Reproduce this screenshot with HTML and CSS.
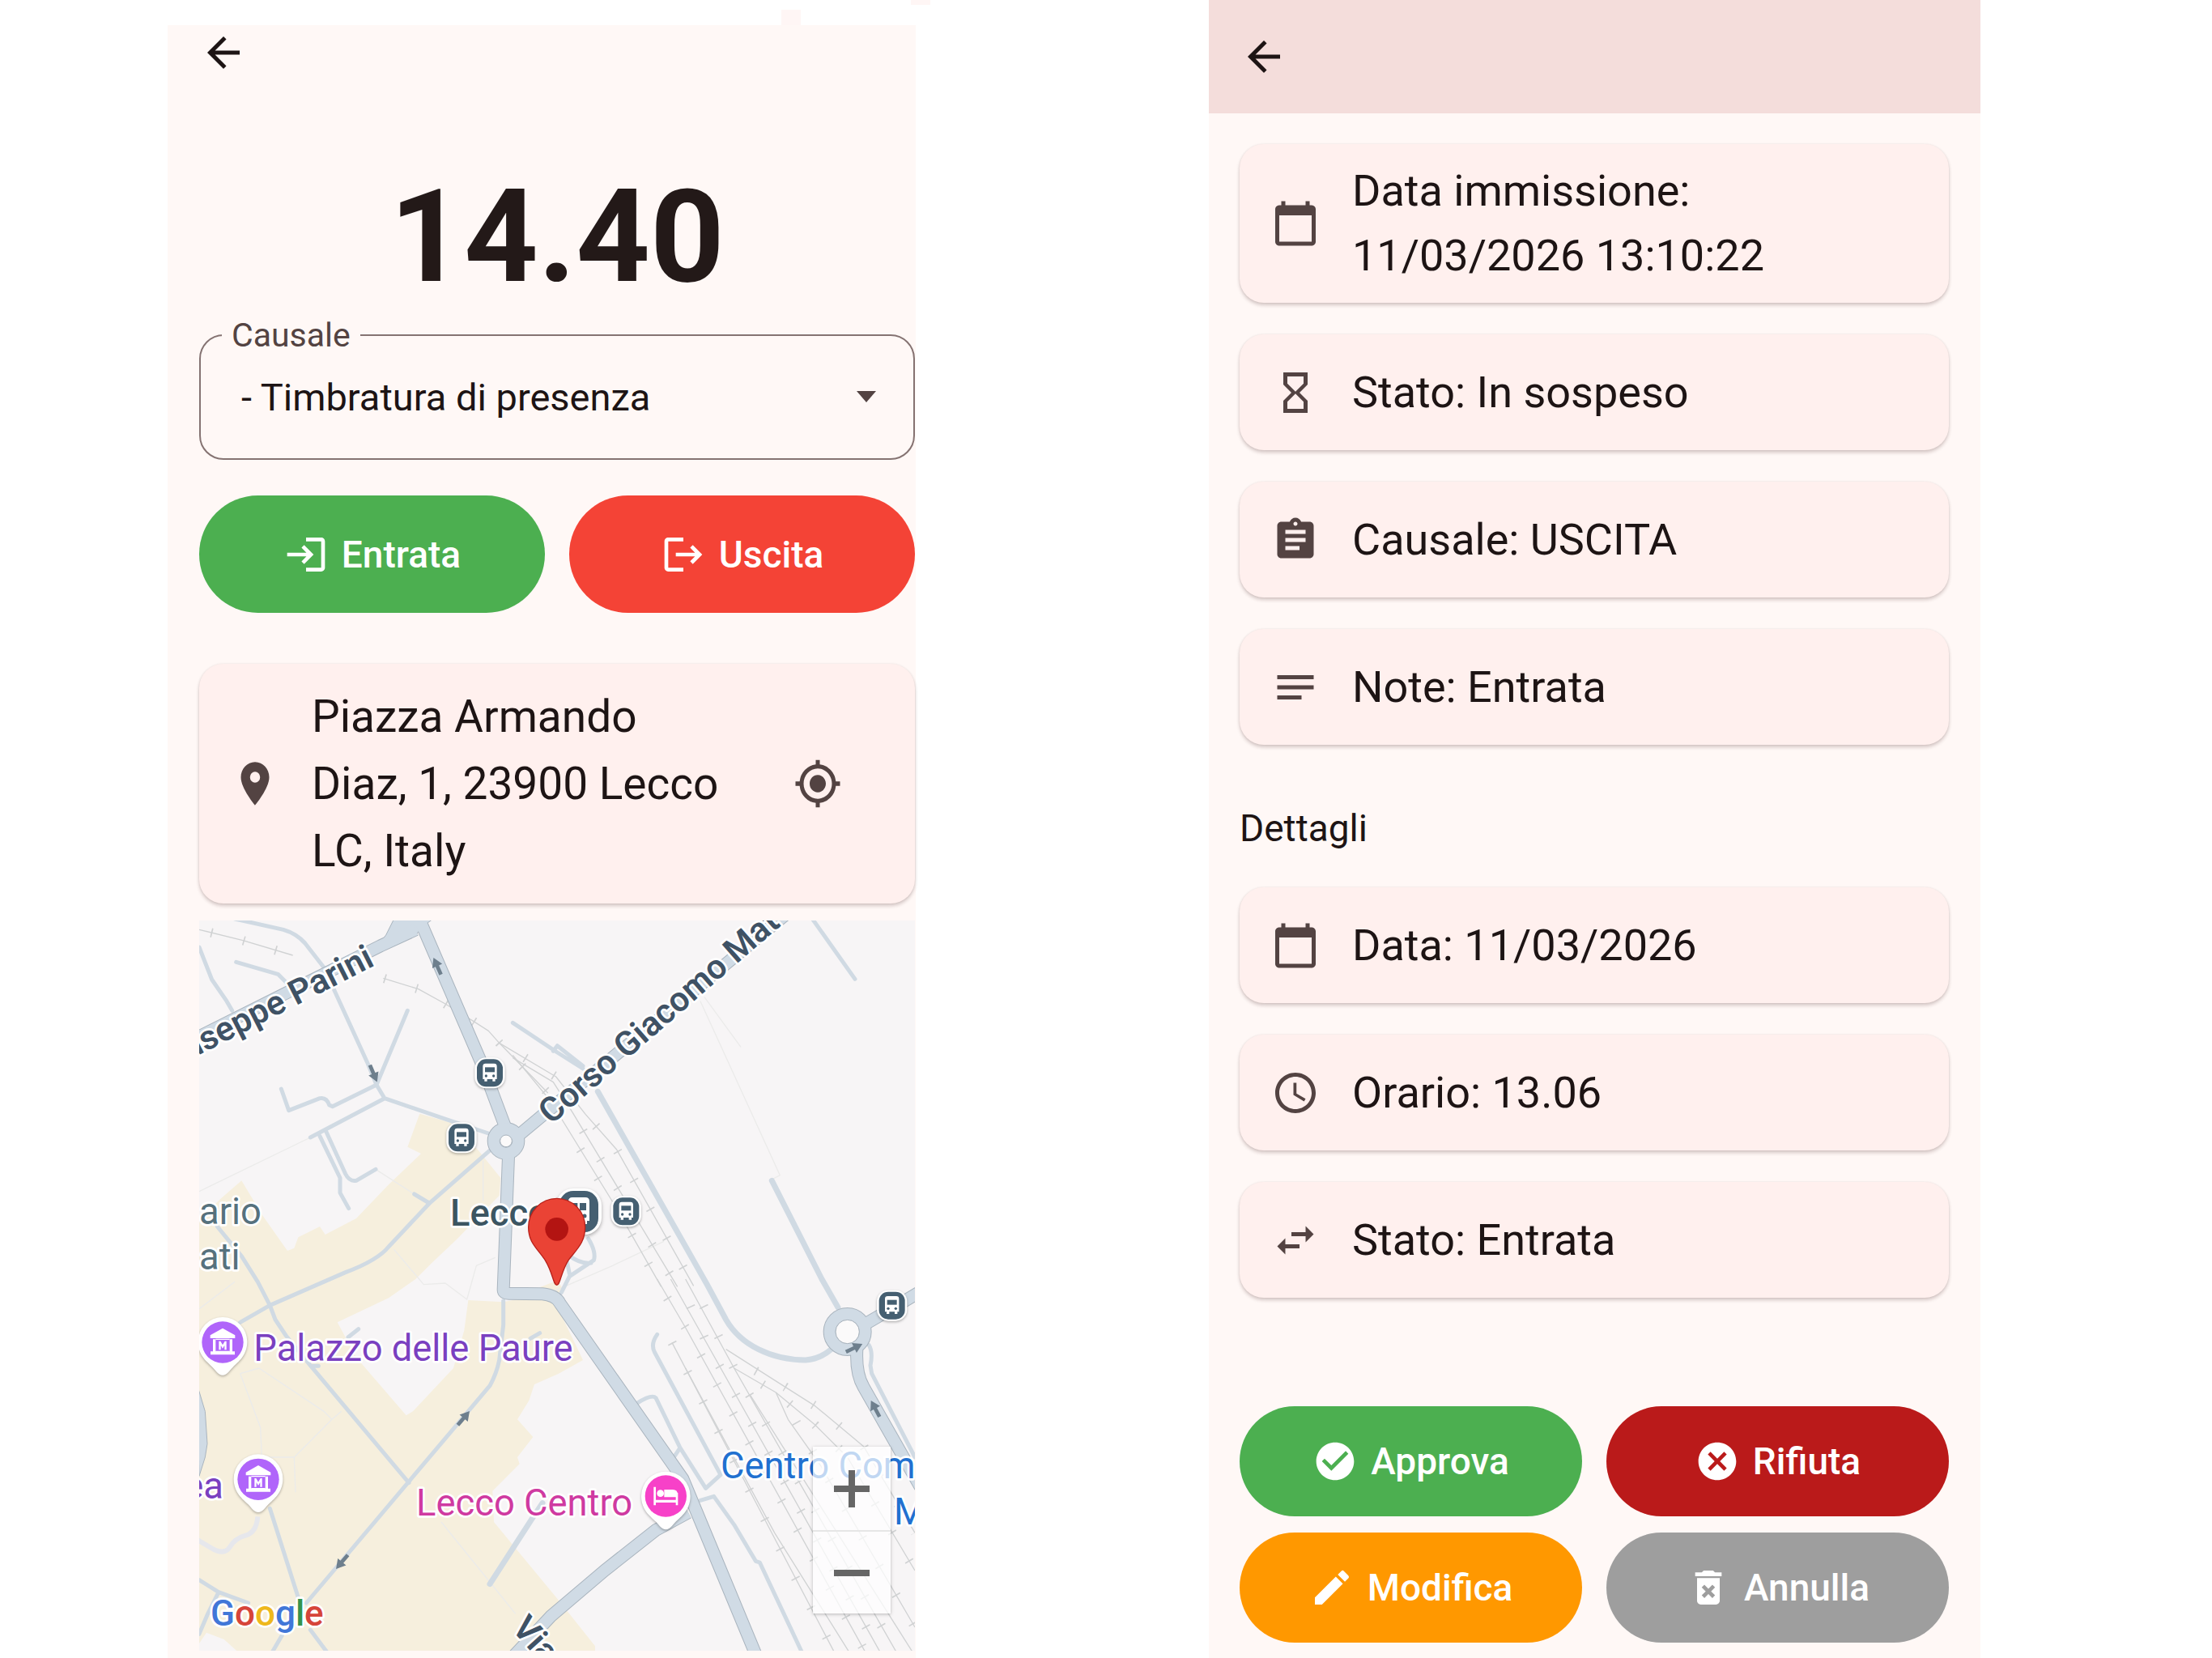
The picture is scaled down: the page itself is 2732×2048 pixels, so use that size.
FILE: index.html
```html
<!DOCTYPE html>
<html lang="it">
<head>
<meta charset="utf-8">
<meta name="viewport" content="width=device-width, initial-scale=1">
<title>Timbrature</title>
<link rel="stylesheet" href="styles.css">
</head>
<body>
<main class="screens">
  <section class="screen screen-stamp" aria-label="Timbratura">
    <span class="speck speck-low"></span>
    <span class="speck speck-high"></span>
    <button class="back" type="button" aria-label="Indietro">
      <svg class="icon" viewBox="0 0 24 24"><path d="M20 11H7.830l5.590-5.590L12 4l-8 8 8 8 1.410-1.410L7.830 13H20v-2z"/></svg>
    </button>
    <h1 class="clock">14.40</h1>

    <fieldset class="field">
      <legend class="field-legend"><label for="causale">Causale</label></legend>
      <div class="field-body">
        <select class="field-select" id="causale">
          <option>- Timbratura di presenza</option>
        </select>
        <svg class="field-caret" viewBox="0 0 24 14"><path d="M0 0h24L12 14z"/></svg>
      </div>
    </fieldset>

    <div class="actions actions-stamp">
      <button class="pill pill-green" type="button">
        <svg class="icon icon-pill" viewBox="0 0 24 24"><path d="M11 7L9.600 8.400l2.600 2.600H2v2h10.200l-2.600 2.600L11 17l5-5-5-5zm9 12h-8v2h8c1.100 0 2-.9 2-2V5c0-1.100-.9-2-2-2h-8v2h8v14z"/></svg>
        Entrata
      </button>
      <button class="pill pill-red" type="button">
        <svg class="icon icon-pill" viewBox="0 0 24 24"><path d="M17 7l-1.410 1.410L18.170 11H8v2h10.170l-2.580 2.580L17 17l5-5zM4 5h8V3H4c-1.100 0-2 .9-2 2v14c0 1.100.9 2 2 2h8v-2H4V5z"/></svg>
        Uscita
      </button>
    </div>

    <div class="card card-address">
      <svg class="icon icon-tall" viewBox="0 0 24 24" preserveAspectRatio="none"><path d="M12 2C8.130 2 5 5.130 5 9c0 5.250 7 13 7 13s7-7.750 7-13c0-3.870-3.130-7-7-7zm0 9.500a2.500 2.500 0 1 1 0-5 2.500 2.500 0 0 1 0 5z"/></svg>
      <p class="address">Piazza Armando<br>Diaz, 1, 23900 Lecco<br>LC, Italy</p>
      <button class="locate" type="button" aria-label="La mia posizione">
        <svg class="icon icon-tall" viewBox="0 0 24 24" preserveAspectRatio="none"><path d="M12 8c-2.210 0-4 1.790-4 4s1.790 4 4 4 4-1.790 4-4-1.790-4-4-4zm8.940 3A8.994 8.994 0 0 0 13 3.060V1h-2v2.060A8.994 8.994 0 0 0 3.060 11H1v2h2.060A8.994 8.994 0 0 0 11 20.940V23h2v-2.060A8.994 8.994 0 0 0 20.940 13H23v-2h-2.060zM12 19c-3.870 0-7-3.130-7-7s3.130-7 7-7 7 3.130 7 7-3.130 7-7 7z"/></svg>
      </button>
    </div>

    <div class="map">
      <svg class="map-canvas" viewBox="18 21 2652 2706" preserveAspectRatio="xMidYMid slice" role="img" aria-label="Mappa di Lecco">
        <defs>
          <g id="bus">
            <rect class="halo" x="-56" y="-56" width="112" height="114" rx="42"/>
            <rect class="badge" x="-48" y="-50" width="96" height="102" rx="34"/>
            <path fill="#fff" d="M-16-34H16Q26-34 26-24V24H20V32H10V24H-10V32H-20V24H-26V-24Q-26-34-16-34Z"/>
            <path class="badge" d="M-18-20H18V-2H-18Z"/>
            <circle class="badge" cx="-14" cy="12" r="5"/><circle class="badge" cx="14" cy="12" r="5"/>
          </g>
          <g id="drop"><path class="halo" d="M0 124C-16 124-24 108-38 94C-56 76-91 52-91 0A91 91 0 0 1 91 0C91 52 56 76 38 94C24 108 16 124 0 124Z"/></g>
          <g id="museum">
            <use href="#drop"/>
            <circle r="77" cy="2" fill="#b065fa"/>
            <path fill="#fff" d="M0-50L46-24V-13H-46V-24ZM-36-9H-26V36H-36ZM26-9H36V36H26ZM-45 36H45V48H-45ZM-14-2H-8L0 12 8-2H14V30H7V13L0 25-7 13V30H-14Z"/>
            <path fill="none" stroke="#fff" stroke-width="4" d="M-26-9H26M-26 36H26"/>
          </g>
          <path id="way" d="M-7 34V0H-20L0-34 20 0H7V34Z"/>
        </defs>

        <path class="land" d="M0 0H2700V2760H0Z"/>
        <path class="town" d="M835 737L950 770 1050 870 1135 975 1130 1040 975 1200 880 1290 820 1350 720 1420 530 1510 600 1640 785 1855 810 1840 960 1680 1000 1540 1015 1428 1145 1435 1320 1400 1440 1650 1350 1700 1260 1740 1240 1800 1197 1870 1255 1935 1197 2010 1205 2035 1105 2135 1110 2250 1180 2335 1350 2540 1485 2710V2730H160L110 2685 45 2660 18 2700V1130L100 1050 175 985 250 1110 345 1245 370 1235 385 1195 465 1155 485 1185 600 1125 720 1000 840 885 790 860Z"/>
        <path class="town" d="M1280 1380L1345 1355 1365 1385 1350 1400Z"/>

        <g class="trace">
          <path d="M1875 320L2170 965 2145 978M1890 305L2025 490M18 1025L430 825M672 943L815 1035M1070 910V1060M740 1240L850 1370 930 1365 1010 1425 1045 1300 1115 1270M1320 1400L1550 1300 1740 1210"/>
          <path d="M170 1700L240 1680 480 1840 510 1870 370 2010 250 2010 245 1900 170 1700M545 1840L510 1870M915 2250L1190 2590M18 1460L150 1360M370 2010L375 2140"/>
        </g>
        <path class="path" d="M235 2230Q230 2290 190 2300 150 2310 130 2345 110 2375 60 2345L10 2315"/>

        <g class="rail">
          <path d="M18 55L180 95 365 150"/>
          <path d="M700 235L830 275 930 330 1035 395 1090 430 1130 475 1310 660"/>
          <path d="M1130 475L1340 600 1450 740 1565 870 1850 1375"/>
          <path d="M1180 530L1330 620 1400 730 1790 1378"/>
          <path d="M1180 520L1320 690 1560 1080 1730 1378"/>
          <path d="M1715 1350L1820 1530 2485 2730"/>
          <path d="M1765 1350L1900 1590 2540 2730"/>
          <path d="M1820 1350L2000 1680 2600 2730"/>
          <path d="M1770 1585L2370 2730"/>
          <path d="M1820 1680L2150 2290 2425 2730"/>
          <path d="M1970 1610L2190 1750 2300 1820 2480 1970 2670 2290"/>
          <path d="M2000 1680L2155 1770 2300 1890 2420 2010 2670 2430"/>
          <path d="M2155 1770L2200 1870 2320 2040 2670 2640"/>
          <path d="M2060 1780L2660 2730"/>
        </g>
        <g class="ties">
          <path d="M62 66L180 95 365 150"/>
          <path d="M704 236L830 275 930 330 1035 395 1090 430 1130 475 1310 660"/>
          <path d="M1225 530L1340 600 1450 740 1565 870 1850 1375"/>
          <path d="M1440 800L1790 1378"/>
          <path d="M1430 870L1560 1080 1730 1378"/>
          <path d="M1752 1420L1820 1530 2485 2730"/>
          <path d="M1838 1450L1900 1590 2540 2730"/>
          <path d="M1887 1450L2000 1680 2600 2730"/>
          <path d="M1770 1585L2370 2730"/>
          <path d="M2080 1690L2190 1750 2300 1820 2480 1970 2670 2290"/>
          <path d="M2105 1740L2155 1770 2300 1890 2420 2010 2670 2430"/>
          <path d="M2230 1880L2320 2040 2670 2640"/>
        </g>

        <g class="lane">
          <path d="M150 15L330 55Q380 70 410 105L480 195 640 545 675 630M18 120L65 240 120 320 140 355M155 175L310 220 345 255"/>
          <path d="M790 355L675 630 705 680M322 645L350 725 465 680Q490 675 500 705L512 710 675 630M430 825L705 680 940 760 1090 810"/>
          <path d="M465 820L540 975V1030L572 1088M487 800L560 960Q575 990 600 985L672 943M815 1035L870 1068"/>
          <path d="M1110 860L870 1070 720 1230Q680 1280 560 1325L280 1447 170 1510M85 1155L175 1265 235 1360 280 1447 300 1500 340 1560 430 1670 795 2105M608 1535L570 1565M460 1672L435 1672"/>
          <path d="M1145 1430V1520L1130 1650Q1120 1700 1095 1745L415 2550M1245 1570L1280 1550M280 2200L385 2530M18 2465L90 2510 200 2550M90 2510L50 2590 18 2665M325 2670L290 2730M430 2650L490 2730"/>
          <path d="M2290 15L2448 238M1180 400L1345 510 1440 570M1330 505L1345 485 1440 560"/>
          <path d="M1460 1200Q1490 1250 1480 1280L1390 1340 1360 1400M1385 1260Q1430 1295 1470 1290M1380 1280L1390 1330"/>
          <path d="M1715 1555Q1690 1590 1705 1620L1950 2075 1895 2125 1800 1975 1710 1790Q1695 1775 1640 1810M1800 1975L1770 2020M1875 2170L1925 2155 2000 2260 2080 2395 2095 2400 2250 2730"/>
          <path d="M2500 1595Q2515 1620 2505 1670L2510 1700 2670 2010"/>
        </g>
        <g class="lane lane-wide">
          <path d="M1495 655L1900 1370 1970 1500Q2010 1570 2090 1610 2170 1650 2265 1650 2320 1645 2360 1610M2140 985L2325 1350 2385 1455M1290 2180L1250 2240 1095 2480"/>
        </g>

        <g class="road-edge">
          <path d="M-20 470L340 290 690 115 820 55M840 30L1060 540 1150 780V830M1165 870L1145 1390Q1145 1403 1165 1403L1290 1405Q1340 1410 1355 1440L1810 2090 1860 2210 2080 2740M1830 2215L1710 2280 1520 2430 1320 2600 1180 2750M1180 835L1300 735 2190 0"/>
          <path d="M2480 1520L2600 1450 2700 1390M2455 1610Q2450 1700 2480 1750L2690 2120"/>
          <circle cx="1155" cy="838" r="46"/><circle cx="2420" cy="1545" r="66"/>
        </g>
        <path class="shore" d="M10 1740L40 1840 48 1960 40 2010 18 2080Z"/>
        <path class="shore" d="M740 15L710 75 690 100 820 75 850 40 885 15Z"/>
        <g class="road">
          <path d="M-20 470L340 290 690 115 820 55M840 30L1060 540 1150 780V830M1165 870L1145 1390Q1145 1403 1165 1403L1290 1405Q1340 1410 1355 1440L1810 2090 1860 2210 2080 2740M1830 2215L1710 2280 1520 2430 1320 2600 1180 2750M1180 835L1300 735 2190 0"/>
          <path d="M2480 1520L2600 1450 2700 1390M2455 1610Q2450 1700 2480 1750L2690 2120"/>
          <circle cx="1155" cy="838" r="46"/><circle cx="2420" cy="1545" r="66"/>
        </g>
        <circle class="island" cx="1155" cy="838" r="22"/>
        <circle class="island" cx="2420" cy="1545" r="44"/>

        <g class="ways">
          <use href="#way" transform="translate(664 588) rotate(157)"/>
          <use href="#way" transform="translate(900 190) rotate(-24)"/>
          <use href="#way" transform="translate(998 1865) rotate(40)"/>
          <use href="#way" transform="translate(547 2398) rotate(220)"/>
          <use href="#way" transform="translate(2445 1605) rotate(64)"/>
          <use href="#way" transform="translate(2523 1830) rotate(-28)"/>
        </g>

        <g class="names">
          <text class="street" text-anchor="end" transform="translate(672 186) rotate(-27)">useppe Parini</text>
          <text class="street" transform="translate(1322 780) rotate(-41)">Corso Giacomo Mat</text>
          <text class="street" transform="translate(1172 2646) rotate(48)">Via</text>
          <text class="area" x="18" y="1145">ario</text>
          <text class="area" x="18" y="1315">ati</text>
          <text class="station" x="948" y="1153">Lecco</text>
          <text class="culture" x="220" y="1653">Palazzo delle Paure</text>
          <text class="culture" x="108" y="2162" text-anchor="end">ea</text>
          <text class="hotel" x="822" y="2226">Lecco Centro</text>
          <text class="shop" x="1950" y="2088">Centro Com</text>
          <text class="shop" x="2592" y="2260">M</text>
        </g>

        <use href="#bus" transform="translate(1095 585)"/>
        <use href="#bus" transform="translate(990 825)"/>
        <use href="#bus" transform="translate(1425 1098) scale(1.5)"/>
        <path fill="#fff" d="M1420 1064H1428V1100H1420Z"/>
        <use href="#bus" transform="translate(1600 1098)"/>
        <use href="#bus" transform="translate(2585 1447)"/>
        <use href="#museum" transform="translate(105 1582)"/>
        <use href="#museum" transform="translate(237 2090)"/>
        <g transform="translate(1747 2154)">
          <use href="#drop"/>
          <circle r="77" fill="#f741c8"/>
          <path fill="#fff" d="M-45-34H-37V14H37V-12H45V34H37V24H-37V34H-45ZM-6-24H26Q44-24 44-6V4H-6Z"/>
          <circle cx="-20" cy="-10" r="13" fill="#fff"/>
        </g>
        <path fill="#ea4335" stroke="#b8211a" stroke-width="4" d="M1343 1372C1330 1372 1330 1330 1300 1280 1270 1235 1238 1215 1238 1158A105 107 0 0 1 1448 1158C1448 1215 1416 1240 1386 1280 1356 1330 1356 1372 1343 1372Z"/>
        <circle cx="1343" cy="1165" r="43" fill="#b31412"/>
        <text class="brand" x="60" y="2633"><tspan fill="#4177d8">G</tspan><tspan fill="#d6453a">o</tspan><tspan fill="#eeb81d">o</tspan><tspan fill="#4177d8">g</tspan><tspan fill="#35934c">l</tspan><tspan fill="#d6453a">e</tspan></text>
      </svg>
      <div class="zoom">
        <button class="zoom-button" type="button" aria-label="Ingrandisci"><svg class="zoom-sign" viewBox="0 0 44 46"><path d="M18 0h8v19h18v8H26v19h-8V27H0v-8h18z"/></svg></button>
        <button class="zoom-button" type="button" aria-label="Riduci"><svg class="zoom-sign" viewBox="0 0 44 46"><path d="M0 19h44v8H0z"/></svg></button>
      </div>
    </div>
  </section>

  <section class="screen screen-request" aria-label="Richiesta">
    <header class="bar">
      <button class="back" type="button" aria-label="Indietro">
        <svg class="icon" viewBox="0 0 24 24"><path d="M20 11H7.830l5.590-5.590L12 4l-8 8 8 8 1.410-1.410L7.830 13H20v-2z"/></svg>
      </button>
    </header>
    <div class="request">
      <div class="cards">
        <div class="card">
          <svg class="icon" viewBox="0 0 24 24"><path d="M20 3h-1V1h-2v2H7V1H5v2H4c-1.100 0-2 .9-2 2v16c0 1.100.9 2 2 2h16c1.100 0 2-.9 2-2V5c0-1.100-.9-2-2-2zm0 18H4V8h16v13z"/></svg>
          <p class="card-text">Data immissione:<br>11/03/2026 13:10:22</p>
        </div>
        <div class="card">
          <svg class="icon" viewBox="0 0 24 24"><path d="M6 2v6h.01L6 8.010 10 12l-4 4 .01.010H6V22h12v-5.990h-.01L18 16l-4-4 4-3.990-.01-.010H18V2H6zm10 14.500V20H8v-3.500l4-4 4 4zm-4-5l-4-4V4h8v3.500l-4 4z"/></svg>
          <p class="card-text">Stato: In sospeso</p>
        </div>
        <div class="card">
          <svg class="icon" viewBox="0 0 24 24"><path d="M19 3h-4.180C14.400 1.840 13.300 1 12 1c-1.300 0-2.400.84-2.820 2H5c-1.100 0-2 .9-2 2v14c0 1.100.9 2 2 2h14c1.100 0 2-.9 2-2V5c0-1.100-.9-2-2-2zm-7 0c.55 0 1 .45 1 1s-.45 1-1 1-1-.45-1-1 .45-1 1-1zm2 14H7v-2h7v2zm3-4H7v-2h10v2zm0-4H7V7h10v2z"/></svg>
          <p class="card-text">Causale: USCITA</p>
        </div>
        <div class="card">
          <svg class="icon" viewBox="0 0 24 24"><path d="M3 18h12v-2H3v2zM3 6v2h18V6H3zm0 7h18v-2H3v2z"/></svg>
          <p class="card-text">Note: Entrata</p>
        </div>
      </div>
      <h2 class="subtitle">Dettagli</h2>
      <div class="cards">
        <div class="card">
          <svg class="icon" viewBox="0 0 24 24"><path d="M20 3h-1V1h-2v2H7V1H5v2H4c-1.100 0-2 .9-2 2v16c0 1.100.9 2 2 2h16c1.100 0 2-.9 2-2V5c0-1.100-.9-2-2-2zm0 18H4V8h16v13z"/></svg>
          <p class="card-text">Data: 11/03/2026</p>
        </div>
        <div class="card">
          <svg class="icon" viewBox="0 0 24 24"><path d="M11.990 2C6.470 2 2 6.480 2 12s4.470 10 9.990 10C17.520 22 22 17.520 22 12S17.520 2 11.990 2zM12 20c-4.420 0-8-3.580-8-8s3.580-8 8-8 8 3.580 8 8-3.580 8-8 8zm.5-13H11v6l5.250 3.150.75-1.230-4.500-2.670z"/></svg>
          <p class="card-text">Orario: 13.06</p>
        </div>
        <div class="card">
          <svg class="icon" viewBox="0 0 24 24"><path d="M6.990 11L3 15l3.990 4v-3H14v-2H6.990v-3zM21 9l-3.990-4v3H10v2h7.010v3L21 9z"/></svg>
          <p class="card-text">Stato: Entrata</p>
        </div>
      </div>
      <div class="actions actions-request">
        <button class="pill pill-green" type="button">
          <svg class="icon icon-pill" viewBox="0 0 24 24"><path d="M12 2C6.480 2 2 6.480 2 12s4.480 10 10 10 10-4.480 10-10S17.520 2 12 2zm-2 15l-5-5 1.410-1.410L10 14.170l7.590-7.590L19 8l-9 9z"/></svg>
          Approva
        </button>
        <button class="pill pill-dark" type="button">
          <svg class="icon icon-pill" viewBox="0 0 24 24"><path d="M12 2C6.470 2 2 6.470 2 12s4.470 10 10 10 10-4.470 10-10S17.530 2 12 2zm5 13.590L15.590 17 12 13.410 8.410 17 7 15.590 10.590 12 7 8.410 8.410 7 12 10.590 15.590 7 17 8.410 13.410 12 17 15.590z"/></svg>
          Rifiuta
        </button>
        <button class="pill pill-orange" type="button">
          <svg class="icon icon-pill" viewBox="0 0 24 24"><path d="M3 17.250V21h3.750L17.810 9.940l-3.750-3.750L3 17.250zM20.710 7.040a.996.996 0 0 0 0-1.410l-2.340-2.340a.996.996 0 0 0-1.410 0l-1.830 1.830 3.750 3.750 1.830-1.830z"/></svg>
          Modifica
        </button>
        <button class="pill pill-gray" type="button">
          <svg class="icon icon-pill" viewBox="0 0 24 24"><path d="M6 19c0 1.100.9 2 2 2h8c1.100 0 2-.9 2-2V7H6v12zm2.460-7.120l1.410-1.410L12 12.590l2.120-2.120 1.410 1.410L13.410 14l2.120 2.120-1.410 1.410L12 15.410l-2.120 2.120-1.410-1.410L10.590 14l-2.130-2.120zM15.500 4l-1-1h-5l-1 1H5v2h14V4z"/></svg>
          Annulla
        </button>
      </div>
    </div>
  </section>
</main>
</body>
</html>
```
FILE: styles.css
```css
* {
  box-sizing: border-box;
}

body {
  margin: 0;
  background: #fff;
  color: #1d1414;
  font-family: Roboto, "Liberation Sans", sans-serif;
}

h1, h2, p {
  margin: 0;
  font-weight: 400;
}

button {
  border: 0;
  padding: 0;
  background: none;
  color: inherit;
  font: inherit;
  cursor: pointer;
}

.icon {
  display: block;
  flex: none;
  width: 60px;
  height: 60px;
  fill: currentColor;
}

.icon-pill {
  width: 56px;
  height: 56px;
}

.icon-tall {
  height: 64px;
}

/* Two phone screens side by side */
.screens {
  display: grid;
  grid-template-columns: 207fr 924fr 362fr 953fr 286fr;
  min-height: 100vh;
}

.screen {
  background: #fff8f6;
}

.screen-stamp {
  position: relative;
  grid-column: 2;
  margin-top: 31px;
  padding: 4px 1px 9px 39px;
}

.screen-request {
  grid-column: 4;
}

.speck {
  position: absolute;
  width: 24px;
  background: #fff6f5;
}

.speck-low {
  top: -19px;
  right: 142px;
  height: 19px;
}

.speck-high {
  top: -31px;
  right: -18px;
  height: 6px;
}

.back {
  display: block;
}

.clock {
  margin-top: 108px;
  font-size: 160px;
  font-weight: 700;
  line-height: 180px;
  text-align: center;
  color: #231918;
}

/* Outlined drop-down */
.field {
  min-width: 0;
  margin: 7px 0 0;
  padding: 0 0 24px;
  border: 2px solid #857372;
  border-radius: 30px;
}

.field-legend {
  margin-left: 26px;
  padding: 0 12px;
  color: #534342;
  font-size: 41px;
  line-height: 48px;
}

.field-body {
  display: grid;
  align-items: center;
}

.field-select {
  grid-area: 1 / 1;
  width: 100%;
  height: 104px;
  padding: 0 90px 0 50px;
  border: 0;
  background: none;
  color: inherit;
  font: inherit;
  font-size: 47px;
  appearance: none;
}

.field-caret {
  grid-area: 1 / 1;
  justify-self: end;
  width: 24px;
  height: 14px;
  margin-right: 46px;
  fill: #534342;
  pointer-events: none;
}

.actions {
  display: grid;
  grid-template-columns: 1fr 1fr;
  column-gap: 30px;
}

.actions-stamp {
  grid-auto-rows: 145px;
  margin-top: 44px;
}

.actions-request {
  grid-auto-rows: 136px;
  row-gap: 20px;
  margin-top: 134px;
}

.pill {
  display: flex;
  align-items: center;
  justify-content: center;
  gap: 16px;
  border-radius: 80px;
  color: #fff;
  font-size: 46px;
  font-weight: 500;
}

.pill-green { background: #4caf50; }
.pill-red { background: #f44336; }
.pill-dark { background: #ba1a1a; }
.pill-orange { background: #ff9800; }
.pill-gray { background: #9e9e9e; }

.card {
  display: flex;
  align-items: center;
  gap: 40px;
  min-height: 143px;
  padding: 18px 39px;
  border-radius: 30px;
  background: #fff0ee;
  box-shadow: 0 3px 4px rgba(70, 30, 30, .22), 0 0 3px rgba(70, 30, 30, .08);
  color: #534342;
}

.card-text {
  color: #1d1414;
  font-size: 54px;
  line-height: 80px;
}

.card-address {
  min-height: 296px;
  margin-top: 63px;
  padding-right: 90px;
}

.address {
  flex: 1;
  color: #1d1414;
  font-size: 55px;
  line-height: 83px;
}

.map {
  position: relative;
  aspect-ratio: 884 / 902;
  margin-top: 21px;
  overflow: hidden;
}

.map-canvas {
  display: block;
  width: 100%;
  height: 100%;
}

.land { fill: #f7f5f6; }
.town { fill: #f6efdd; }
.halo { fill: #fff; filter: drop-shadow(0 4px 4px rgba(0, 0, 0, .3)); }
.badge { fill: #455f71; }

.trace, .path, .rail, .ties, .lane, .road, .road-edge {
  fill: none;
  stroke-linejoin: round;
}

.trace { stroke: #ebebea; stroke-width: 4; }
.path { stroke: #e6e7ec; stroke-width: 18; }
.rail { stroke: #d0d2d3; stroke-width: 4; }
.ties { stroke: #d0d2d3; stroke-width: 34; stroke-dasharray: 5 118; }
.lane { stroke: #d0dae3; stroke-width: 15; stroke-linecap: round; }
.lane-wide { stroke-width: 21; }
.road { stroke: #d0dbe5; stroke-width: 42; }
.road-edge { stroke: #a9b4be; stroke-width: 48; }
.shore { fill: #d0dbe5; stroke: #a9b4be; stroke-width: 3; }
.island { fill: #fbfafa; stroke: #a9b4be; stroke-width: 3; }
.ways { fill: #6e7f8d; }

.names text, .brand {
  stroke: #fff;
  stroke-width: 16;
  stroke-linejoin: round;
  paint-order: stroke;
}

.names {
  font-size: 136px;
}

.street { fill: #3f5265; font-weight: 600; font-size: 127px; }
.area { fill: #56717d; }
.station { fill: #3c5562; font-weight: 500; }
.culture { fill: #7a40c0; }
.hotel { fill: #cf3aa1; }
.shop { fill: #2170d0; }

.brand {
  font-size: 132px;
  font-weight: 500;
}

/* Zoom control floats over the map's lower right corner */
.zoom {
  position: absolute;
  right: 30px;
  bottom: 46px;
  display: grid;
  grid-template-rows: 1fr 1fr;
  width: 96px;
  height: 206px;
  background: rgba(255, 255, 255, .72);
  box-shadow: 0 1px 4px rgba(0, 0, 0, .25);
}

.zoom-button {
  display: grid;
  place-items: center;
}

.zoom-button + .zoom-button {
  border-top: 2px solid #e6e6e6;
}

.zoom-sign {
  width: 44px;
  height: 46px;
  fill: #666;
}

.bar {
  display: flex;
  align-items: center;
  height: 140px;
  padding: 0 38px;
  background: #f4dddb;
}

.request {
  padding: 38px 39px 18px 38px;
}

.cards {
  display: grid;
  row-gap: 39px;
}

.subtitle {
  margin: 73px 0 43px;
  font-size: 46px;
  line-height: 60px;
}
```
